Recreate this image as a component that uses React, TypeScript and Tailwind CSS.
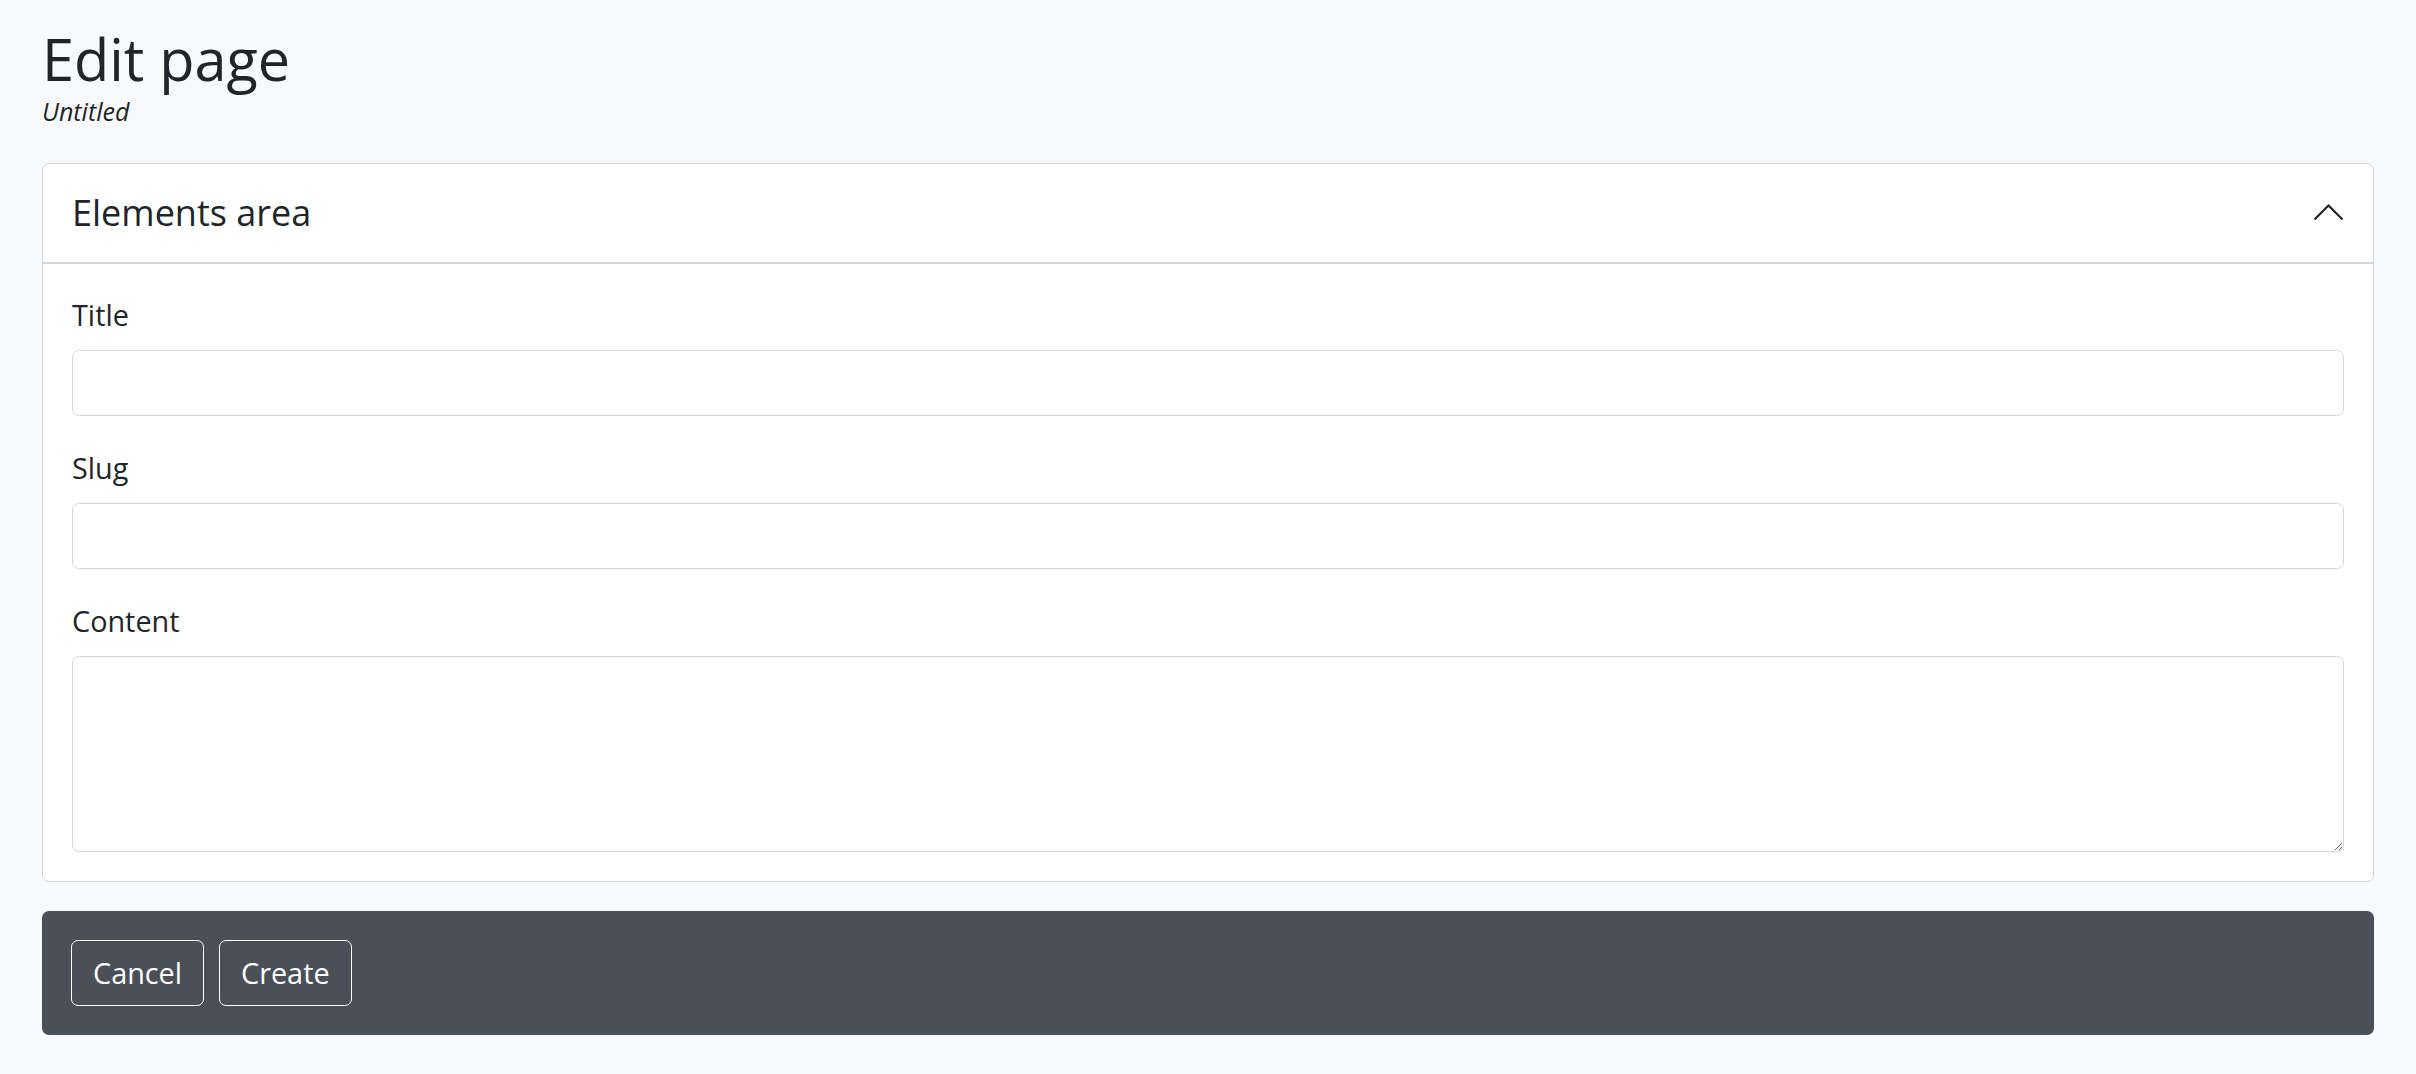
const fields = [
    { id: 'title', label: 'Title' },
    { id: 'slug', label: 'Slug' },
];

const App = () => {
    return (
        <div className="min-h-screen bg-[#f8f9fa] px-[42px] pt-[24px] font-['Open_Sans',sans-serif] text-[#212529]">
            <h1 className="text-[57.6px] leading-[1.2] font-normal">Edit page</h1>
            <div className="text-[25px] italic leading-[1.5]">Untitled</div>

            <div className="mt-[32px] bg-white border border-[#d0d4d8] rounded-[7px]">
                <div className="h-[100px] px-[29px] flex items-center justify-between border-b-2 border-[#d3d6d9]">
                    <h5 className="text-[36px] leading-[1.2] font-normal">Elements area</h5>
                    <svg width="31" height="17" viewBox="0 0 31 17" fill="none" className="shrink-0">
                        <polyline points="1.5,15.5 15.5,1.5 29.5,15.5" stroke="#212529" strokeWidth="2.2" />
                    </svg>
                </div>
                <div className="p-[29px]">
                    {fields.map((field) => (
                        <div key={field.id} className="mb-[30px]">
                            <label htmlFor={field.id} className="block text-[28.8px] leading-[43px] mb-[14px]">
                                {field.label}
                            </label>
                            <input
                                id={field.id}
                                type="text"
                                className="block w-full h-[66px] px-[21px] text-[28.8px] bg-white border border-[#d4d7db] rounded-[7px] focus:outline-none"
                            />
                        </div>
                    ))}
                    <div>
                        <label htmlFor="content" className="block text-[28.8px] leading-[43px] mb-[14px]">
                            Content
                        </label>
                        <textarea
                            id="content"
                            className="block w-full h-[196px] px-[21px] py-[11px] text-[28.8px] bg-white border border-[#d4d7db] rounded-[7px] focus:outline-none"
                        />
                    </div>
                </div>
            </div>

            <div className="mt-[29px] bg-[#4b5058] rounded-[7px] p-[29px] flex gap-[15px]">
                <button className="h-[66px] px-[21px] border border-white rounded-[7px] text-white text-[28.8px] leading-[1.5]">
                    Cancel
                </button>
                <button className="h-[66px] px-[21px] border border-white rounded-[7px] text-white text-[28.8px] leading-[1.5]">
                    Create
                </button>
            </div>
        </div>
    );
};

export default App;
